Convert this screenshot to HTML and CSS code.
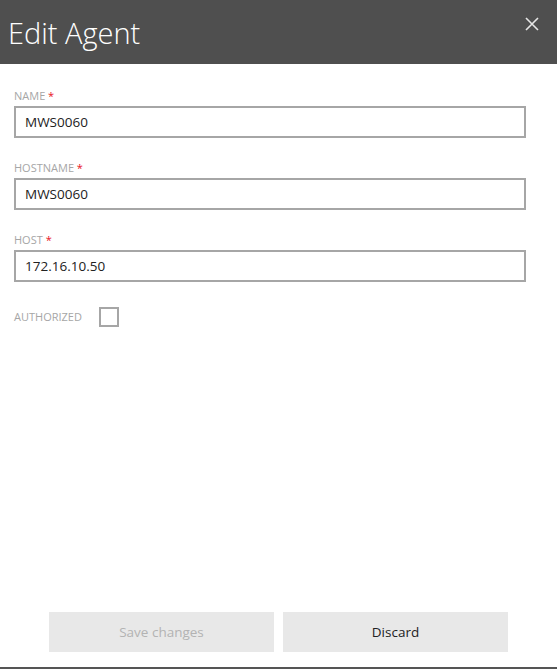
FILE: index.html
```html
<!DOCTYPE html>
<html lang="en">
<head>
    <meta charset="UTF-8">
    <meta name="viewport" content="width=device-width, initial-scale=1.0">
    <title>Edit Agent</title>
    <link rel="stylesheet" href="styles.css">
</head>
<body>
    <div class="dialog">
        <div class="dialog-header">
            <h1>Edit Agent</h1>
            <button type="button" class="close-btn" aria-label="Close">
                <svg width="14" height="14" viewBox="0 0 14 14">
                    <path d="M1 1 L13 13 M13 1 L1 13" stroke="#e6e6e6" stroke-width="1.6" fill="none"/>
                </svg>
            </button>
        </div>
        <form class="dialog-body">
            <div class="form-group">
                <label for="name">Name <span class="req">*</span></label>
                <input type="text" id="name" value="MWS0060">
            </div>
            <div class="form-group">
                <label for="hostname">Hostname <span class="req">*</span></label>
                <input type="text" id="hostname" value="MWS0060">
            </div>
            <div class="form-group">
                <label for="host">Host <span class="req">*</span></label>
                <input type="text" id="host" value="172.16.10.50">
            </div>
            <div class="check-row">
                <label for="authorized">Authorized</label>
                <span class="checkbox" id="authorized"></span>
            </div>
        </form>
        <div class="dialog-footer">
            <button type="button" class="btn btn-disabled">Save changes</button>
            <button type="button" class="btn">Discard</button>
        </div>
    </div>
</body>
</html>
```

FILE: styles.css
```css
html, body {
    margin: 0;
    height: 100%;
}

body {
    font-family: "Segoe UI", "Open Sans", "Noto Sans", sans-serif;
    background-color: #ffffff;
}

.dialog {
    height: 100%;
    box-sizing: border-box;
    display: flex;
    flex-direction: column;
    border-bottom: 2px solid #555555;
}

.dialog-header {
    height: 64px;
    flex-shrink: 0;
    background-color: #4f4f4f;
    display: flex;
    justify-content: space-between;
    align-items: flex-start;
}

.dialog-header h1 {
    margin: 0;
    padding: 13px 0 0 8px;
    font-size: 29px;
    font-weight: 300;
    color: #ffffff;
    line-height: 40px;
}

.close-btn {
    margin: 17px 18px 0 0;
    padding: 0;
    border: none;
    background: none;
    cursor: pointer;
    line-height: 0;
}

.dialog-body {
    flex: 1;
    padding: 24px 31px 0 14px;
}

.form-group {
    margin-bottom: 22px;
}

label {
    display: block;
    font-size: 11px;
    line-height: 16px;
    text-transform: uppercase;
    color: #a6a6a6;
    margin-bottom: 2px;
}

.req {
    color: #e81123;
}

input {
    display: block;
    width: 100%;
    height: 32px;
    box-sizing: border-box;
    padding: 0 9px;
    font-family: inherit;
    font-size: 13.5px;
    color: #222222;
    border: 2px solid #a6a6a6;
    border-radius: 0;
    outline: none;
}

.check-row {
    display: flex;
    align-items: center;
    margin-top: 25px;
}

.check-row label {
    margin: 0 17px 0 0;
}

.checkbox {
    width: 20px;
    height: 20px;
    box-sizing: border-box;
    border: 2px solid #a6a6a6;
}

.dialog-footer {
    display: flex;
    justify-content: center;
    gap: 9px;
    padding-bottom: 15px;
}

.btn {
    width: 225px;
    height: 40px;
    border: none;
    background-color: #e8e8e8;
    font-family: inherit;
    font-size: 13.5px;
    color: #222222;
    cursor: pointer;
}

.btn-disabled {
    color: #b3b3b3;
    cursor: default;
}
```
